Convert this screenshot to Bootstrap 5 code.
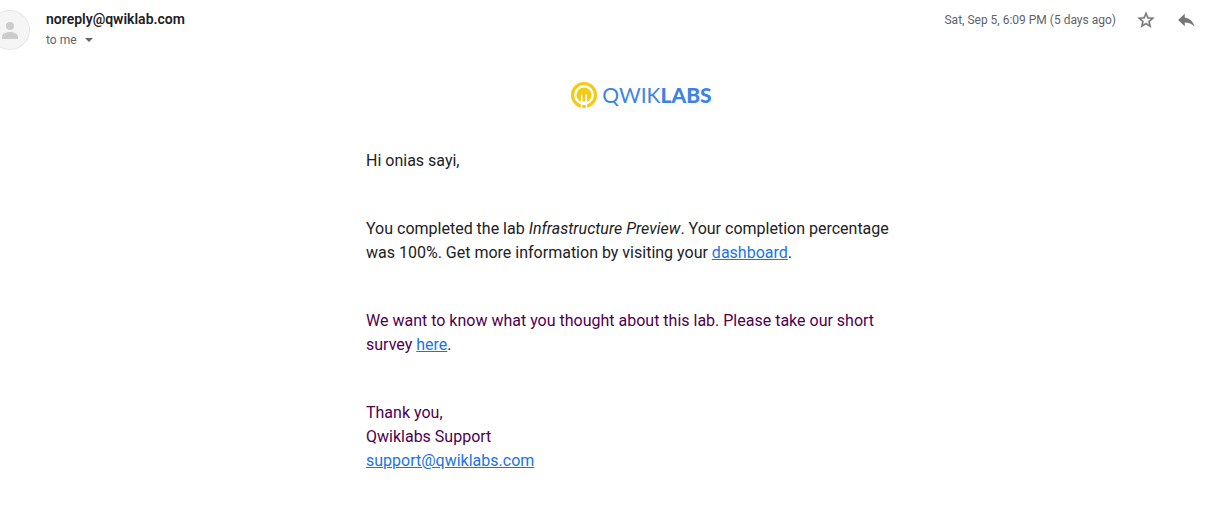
<!DOCTYPE html>
<html lang="en">
<head>
<meta charset="utf-8">
<meta name="viewport" content="width=device-width, initial-scale=1">
<title>Lab completed</title>
<link href="https://cdn.jsdelivr.net/npm/bootstrap@5.3.0/dist/css/bootstrap.min.css" rel="stylesheet">
<style>
body { font-family: Roboto, "Liberation Sans", sans-serif; color: #222; background: #fff; }
.mail-head { padding: 10px 15px 0 0; }
.avatar { width: 40px; height: 40px; margin-left: -10px; }
.sender { font-size: 14px; line-height: 18px; font-weight: 600; color: #202124; }
.meta { font-size: 12px; line-height: 20px; color: #5f6368; }
.recipient { line-height: 24px; }
.tool { line-height: 0; color: #777; margin-left: 20px; }
.message { padding: 29px 0 0 71px; }
.letter { max-width: 550px; font-size: 16px; line-height: 24px; }
.letter p { margin-bottom: 44px; }
.letter a { color: #1a73e8; }
.logo { font-family: Lato, sans-serif; font-size: 21px; line-height: 28px; color: #3e83e4; margin-bottom: 40px; }
.logo strong { font-weight: 900; }
.logo .thin { font-weight: 400; }
.quoted { color: #500050; }
</style>
</head>
<body>
<header class="mail-head d-flex align-items-start overflow-hidden">
  <svg class="avatar flex-shrink-0" viewBox="0 0 40 40" role="img" aria-label="Sender">
    <circle cx="20" cy="20" r="19.500" fill="#f5f5f5" stroke="#e4e4e4"/>
    <circle cx="20" cy="16" r="4" fill="#ccc"/>
    <path d="M12 29v-2.500c0-3 5-4.500 8-4.500s8 1.500 8 4.500V29z" fill="#ccc"/>
  </svg>
  <div class="ms-3 flex-grow-1">
    <div class="sender">noreply@qwiklab.com</div>
    <button type="button" class="meta recipient btn p-0 border-0 d-flex align-items-center gap-2">to me
      <svg width="8" height="4" viewBox="0 0 8 4" aria-hidden="true"><path d="M0 0h8L4 4z" fill="#666"/></svg>
    </button>
  </div>
  <time class="meta">Sat, Sep 5, 6:09 PM (5 days ago)</time>
  <button type="button" class="tool btn p-0 border-0" aria-label="Star">
    <svg width="20" height="20" viewBox="0 0 24 24" fill="currentColor" stroke="currentColor" stroke-width=".4"><path d="M22 9.240l-7.190-.620L12 2 9.190 8.630 2 9.240l5.460 4.730L5.820 21 12 17.270 18.180 21l-1.630-7.030L22 9.240zM12 15.400l-3.760 2.270 1-4.280-3.320-2.880 4.380-.380L12 6.100l1.710 4.040 4.380.380-3.320 2.880 1 4.280L12 15.400z"/></svg>
  </button>
  <button type="button" class="tool btn p-0 border-0" aria-label="Reply">
    <svg width="20" height="20" viewBox="0 0 24 24" fill="currentColor"><path d="M10.500 9V4.500L2.500 12l8 7.500v-4.600c5 0 8.500 1.600 11.500 5.100-1-5-4.500-10-11.500-11z"/></svg>
  </button>
</header>
<main class="message">
  <article class="letter mx-auto">
    <div class="logo d-flex justify-content-center align-items-center">
      <svg class="me-1" width="28" height="28" viewBox="0 0 28 28" aria-hidden="true">
        <circle cx="14" cy="14" r="11.500" fill="none" stroke="#f4cb14" stroke-width="3.200"/>
        <circle cx="14" cy="14" r="7.600" fill="#f4cb14"/>
        <path d="M10.900 28V13.500h1.600V20l-.5 8zM15.500 13.500h1.600V28H16l-.5-8z" fill="#fff"/>
        <path d="M12 20.500h4V24h-4z" fill="#fff"/>
      </svg>
      <span><span class="thin">QWIK</span><strong>LABS</strong></span>
    </div>
    <p>Hi onias sayi,</p>
    <p>You completed the lab <em>Infrastructure Preview</em>. Your completion percentage was 100%. Get more information by visiting your <a href="#dashboard">dashboard</a>.</p>
    <div class="quoted">
      <p>We want to know what you thought about this lab. Please take our short survey <a href="#survey">here</a>.</p>
      <p>Thank you,<br>Qwiklabs Support<br><a href="mailto:support@qwiklabs.com">support@qwiklabs.com</a></p>
    </div>
  </article>
</main>
<script src="https://cdn.jsdelivr.net/npm/bootstrap@5.3.0/dist/js/bootstrap.bundle.min.js"></script>
</body>
</html>
